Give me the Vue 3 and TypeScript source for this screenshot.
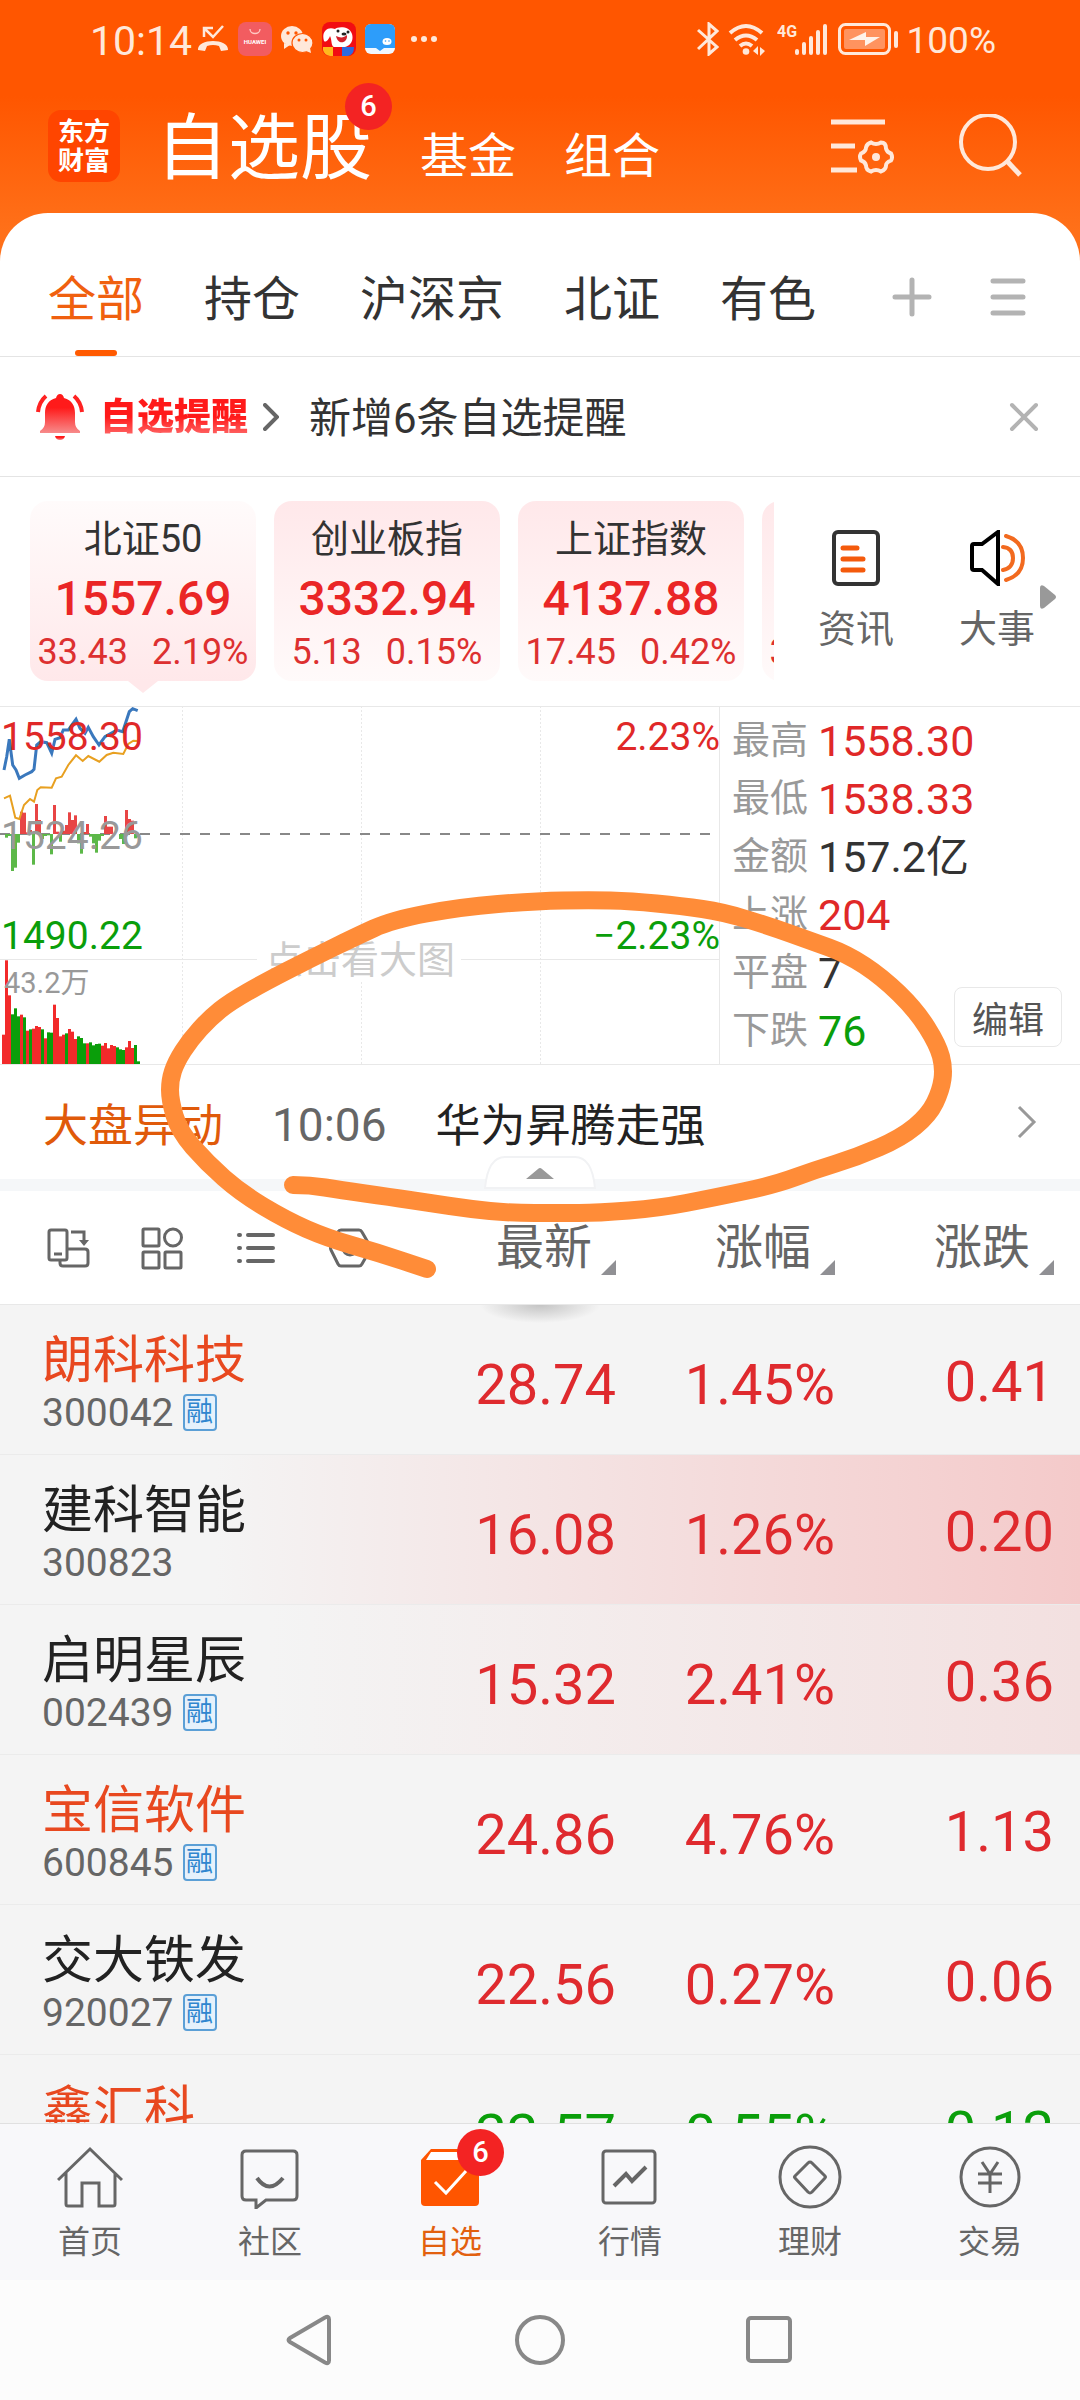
<script setup lang="ts">
interface IndexCard {
  name: string
  value: string
  diff: string
  pct: string
}
interface Stock {
  name: string
  code: string
  margin: boolean
  owned: boolean
  price: string
  pct: string
  diff: string
  down?: boolean
  glow?: string
}

const groups: string[] = ['全部', '持仓', '沪深京', '北证', '有色']

const cards: IndexCard[] = [
  { name: '北证50', value: '1557.69', diff: '33.43', pct: '2.19%' },
  { name: '创业板指', value: '3332.94', diff: '5.13', pct: '0.15%' },
  { name: '上证指数', value: '4137.88', diff: '17.45', pct: '0.42%' },
  { name: '', value: '', diff: '33.43', pct: '0.15%' },
]

const stats = [
  { label: '最高', value: '1558.30', tone: 'up' },
  { label: '最低', value: '1538.33', tone: 'up' },
  { label: '金额', value: '157.2亿', tone: 'flat' },
  { label: '上涨', value: '204', tone: 'up' },
  { label: '平盘', value: '7', tone: 'flat' },
  { label: '下跌', value: '76', tone: 'down' },
]

const stocks: Stock[] = [
  { name: '朗科科技', code: '300042', margin: true, owned: true, price: '28.74', pct: '1.45%', diff: '0.41' },
  { name: '建科智能', code: '300823', margin: false, owned: false, price: '16.08', pct: '1.26%', diff: '0.20', glow: 'strong' },
  { name: '启明星辰', code: '002439', margin: true, owned: false, price: '15.32', pct: '2.41%', diff: '0.36', glow: 'soft' },
  { name: '宝信软件', code: '600845', margin: true, owned: true, price: '24.86', pct: '4.76%', diff: '1.13' },
  { name: '交大铁发', code: '920027', margin: true, owned: false, price: '22.56', pct: '0.27%', diff: '0.06' },
  { name: '鑫汇科', code: '831167', margin: false, owned: true, price: '22.57', pct: '0.55%', diff: '0.12', down: true },
]

// Volume per minute: colour and height in thirds of a pixel
const volume: [string, number][] = [
  ['r', 88], ['r', 311], ['r', 206], ['g', 149], ['g', 167], ['g', 143], ['r', 148], ['g', 140], ['r', 100], ['g', 104],
  ['r', 106], ['r', 114], ['r', 111], ['g', 104], ['r', 77], ['g', 95], ['g', 94], ['r', 178], ['r', 138], ['r', 83],
  ['r', 88], ['g', 92], ['r', 105], ['r', 97], ['r', 75], ['g', 83], ['g', 78], ['g', 62], ['r', 62], ['g', 65],
  ['g', 56], ['g', 60], ['g', 61], ['r', 55], ['r', 63], ['r', 47], ['r', 57], ['r', 54], ['g', 50], ['g', 44],
  ['g', 42], ['r', 50], ['r', 69], ['r', 48], ['g', 57], ['g', 8],
]
// Net momentum around the previous close: minute, signed height in thirds
const momentum: [number, number][] = [
  [1, -11], [2, -6], [3, -111], [4, -101], [5, -26], [6, 67], [7, 64], [8, 5], [9, 12], [10, -92], [11, 90], [12, 42],
  [13, -15], [14, -6], [15, -4], [16, -61], [17, 87], [18, 7], [19, -23], [20, 10], [21, 27], [22, 65], [23, 42], [24, 56],
  [25, -28], [26, -59], [27, 6], [28, 30], [29, -8], [30, -28], [31, -56], [32, -20], [33, -6], [34, 54], [35, 22],
  [36, 22], [37, 2], [39, -15], [40, -30], [41, 72], [42, 45], [43, 40], [44, -13], [45, -10],
]

const priceLine = [
  12, 240, 20, 200, 28, 148, 38, 225, 48, 240, 58, 265, 75, 255, 95, 245, 102, 238, 110, 165, 122, 155, 140, 158, 155, 190,
  165, 148, 180, 143, 190, 120, 205, 120, 215, 105, 228, 88, 240, 115, 255, 130, 265, 112, 280, 140, 297, 165, 315, 140,
  340, 126, 350, 120, 368, 125, 378, 95, 388, 65, 398, 56, 413, 62,
]
const averageLine = [
  12, 325, 30, 317, 38, 350, 46, 383, 58, 387, 72, 345, 90, 327, 102, 335, 112, 300, 122, 292, 155, 293, 168, 265, 185, 260,
  205, 225, 228, 196, 248, 213, 265, 198, 298, 215, 320, 195, 340, 188, 370, 192, 385, 162, 400, 152, 413, 153,
]
function toPoints(values: number[]): string {
  const out: string[] = []
  for (let i = 0; i < values.length; i += 2) {
    out.push(`${(values[i] / 3).toFixed(1)},${(values[i + 1] / 3 - 16).toFixed(1)}`)
  }
  return out.join(' ')
}

// Hand-drawn circle, from its lower left start round to the tail
const stroke: [number, number][] = [
  [293, 1185], [310, 1185], [340, 1190], [390, 1197], [430, 1203], [470, 1209], [510, 1213], [560, 1213], [598, 1213],
  [660, 1208], [712, 1198], [774, 1185], [815, 1170], [857, 1157], [901, 1138], [929, 1115], [941, 1090], [944, 1068],
  [938, 1045], [916, 1010], [882, 977], [847, 954], [811, 941], [769, 926], [723, 912], [682, 906], [631, 901],
  [590, 900], [535, 901], [461, 907], [392, 920], [355, 937], [310, 959], [265, 982], [230, 1002], [210, 1018],
  [190, 1040], [176, 1062], [170, 1080], [170, 1100], [179, 1131], [207, 1163], [241, 1193], [286, 1220], [327, 1238],
  [379, 1253], [427, 1269],
]
function smooth(points: [number, number][]): string {
  let d = `M${points[0].join(' ')}`
  for (let i = 1; i < points.length - 1; i++) {
    const [x, y] = points[i]
    const [nx, ny] = points[i + 1]
    d += `Q${x} ${y} ${(x + nx) / 2} ${(y + ny) / 2}`
  }
  return d + `L${points[points.length - 1].join(' ')}`
}
const doodle = smooth(stroke)
</script>

<template>
  <div class="page">
    <header class="top">
      <div class="status">
        <span class="clock">10:14</span>
        <div class="notices">
          <svg width="32" height="30" viewBox="0 0 32 30" fill="none">
            <path d="M7 13V4h9M7 4l9 9L26 2" stroke="#ffe8da" stroke-width="2.500" />
            <path d="M1 26c-1-12 31-12 30 0l-7 1-2-5q-6-2-12 0l-2 5z" fill="#ffe8da" />
          </svg>
          <svg width="34" height="34" viewBox="0 0 34 34">
            <rect width="34" height="34" rx="8" fill="#f25c60" />
            <path d="M12 7c0 6 10 6 10 0" fill="none" stroke="#ffc9c4" stroke-width="1.3" />
            <text x="17" y="22" font-size="6" font-weight="700" fill="#fff" text-anchor="middle">HUAWEI</text>
          </svg>
          <svg width="32" height="30" viewBox="0 0 32 30">
            <ellipse cx="11" cy="12" rx="11" ry="10" fill="#ffe8da" />
            <path d="M3 19l0 6 6-4z" fill="#ffe8da" />
            <ellipse cx="21.500" cy="19" rx="10.500" ry="9.500" fill="#ffe8da" stroke="#ff5600" stroke-width="1.200" />
            <path d="M25 27l5 2-1-5z" fill="#ffe8da" />
            <g fill="#ff5600"><circle cx="7" cy="9" r="1.700" /><circle cx="15" cy="9" r="1.700" /><circle cx="18" cy="16" r="1.500" /><circle cx="25" cy="16" r="1.500" /></g>
          </svg>
          <svg width="34" height="34" viewBox="0 0 34 34">
            <rect width="34" height="34" rx="8" fill="#f20d12" />
            <path d="M2 19C-1 9 6 4 13 7c3-3 15-3 17 5 2 7-2 12-7 13H12C9 24 10 18 8 14c-1 3-4 7-6 5z" fill="#fff" />
            <path d="M14 14c4 2 8 2 11-1 1 8-9 11-11 1z" fill="#d3202a" />
            <circle cx="16" cy="9" r="1.500" fill="#222" /><circle cx="26" cy="10" r="1.500" fill="#222" /><ellipse cx="22" cy="12" rx="2.500" ry="1.500" fill="#222" />
            <path d="M1 25h10v9H8q-6-1-7-6z" fill="#ffb91c" /><path d="M20 25h12q0 8-6 9h-6z" fill="#2c6be0" />
          </svg>
          <svg width="30" height="30" viewBox="0 0 30 30">
            <rect width="30" height="30" rx="6" fill="#f2f8ff" />
            <path d="M0 24V6q0-6 6-6h18q6 0 6 6v18H19l-4 3-4-3z" fill="#2d9dfa" />
            <ellipse cx="22" cy="17.500" rx="4.500" ry="3.600" fill="#fff" /><circle cx="20.500" cy="17" r=".8" fill="#2d9dfa" /><circle cx="24" cy="17" r=".8" fill="#2d9dfa" />
          </svg>
          <svg width="26" height="8" viewBox="0 0 26 8" fill="#ffe8da"><circle cx="3" cy="4" r="3" /><circle cx="13" cy="4" r="3" /><circle cx="23" cy="4" r="3" /></svg>
        </div>
        <div class="signals">
          <svg width="22" height="34" viewBox="0 0 22 34" fill="none" stroke="#ffe8da" stroke-width="3"><path d="M1 8l19 17-8 7V2l8 7L1 27" /></svg>
          <svg width="40" height="34" viewBox="0 0 40 34" fill="none" stroke="#ffe8da" stroke-width="4">
            <path d="M2 11q16-14 32 0M7 18q11-9 22 0M12 24q6-5 12 0" />
            <circle cx="18" cy="29.500" r="3.300" fill="#ffe8da" stroke="none" />
            <path d="M25 29l5-5v9M37 29l-5-4v9" fill="#ffe8da" stroke="none" />
          </svg>
          <svg width="52" height="34" viewBox="0 0 52 34">
            <text x="0" y="15" class="net">4G</text>
            <g fill="#ffe8da"><rect x="18" y="27" width="4" height="6" rx="2" /><rect x="25" y="20" width="4" height="13" rx="2" /><rect x="32" y="14" width="4" height="19" rx="2" /><rect x="39" y="8" width="4" height="25" rx="2" /><rect x="46" y="2" width="4" height="31" rx="2" /></g>
          </svg>
          <svg width="60" height="34" viewBox="0 0 60 34">
            <rect x="1.500" y="2.500" width="50" height="29" rx="6" fill="none" stroke="#ffe8da" stroke-width="3" />
            <rect x="6" y="7" width="41" height="20" rx="2" fill="#ff935f" />
            <path d="M11 18l17-8v5h14L27 24v-6z" fill="#fff3ea" /><rect x="56" y="9" width="4" height="17" rx="2" fill="#ffe8da" />
          </svg>
          <span class="battery">100%</span>
        </div>
      </div>
      <div class="title">
        <div class="logo"><span>东方</span><span>财富</span></div>
        <nav class="mains">
          <a href="#watch" class="big">自选股<b class="badge">6</b></a>
          <a href="#fund">基金</a>
          <a href="#combo">组合</a>
        </nav>
        <div class="actions">
          <button aria-label="设置">
            <svg width="64" height="64" viewBox="0 0 64 64" fill="none" stroke="#ffe8da" stroke-width="5">
              <path d="M1 8h54M1 32h24M1 56h26" />
              <path d="M41 28.500q5 3 10 0c3 0 5 2 5 6q1 4 5 5 2 4 0 7-5 2-5 5 0 4-5 6-5-3-10 0c-4-1-5-3-5-6q-1-4-5-5-2-4 0-7 5-2 5-6 1-4 5-5z" stroke-width="4" />
              <circle cx="46" cy="43" r="4" fill="#ffe8da" stroke="none" />
            </svg>
          </button>
          <button aria-label="搜索">
            <svg width="64" height="64" viewBox="0 0 64 64" fill="none" stroke="#ffe8da" stroke-width="4"><circle cx="30" cy="28" r="27" /><path d="M49 47l13 14" stroke-width="5" /></svg>
          </button>
        </div>
      </div>
    </header>

    <main class="sheet">
      <div class="groups">
        <button v-for="(g, i) in groups" :key="g" :class="{ on: i === 0 }">{{ g }}</button>
        <div class="tools">
          <button aria-label="添加"><svg width="40" height="40" viewBox="0 0 40 40" stroke="#b3b3b3" stroke-width="5" stroke-linecap="round"><path d="M20 3v34M3 20h34" /></svg></button>
          <button aria-label="菜单"><svg width="36" height="40" viewBox="0 0 36 40" stroke="#b3b3b3" stroke-width="5" stroke-linecap="round"><path d="M3 4h30M3 20h30M3 36h30" /></svg></button>
        </div>
      </div>

      <div class="notice">
        <svg width="48" height="48" viewBox="0 0 48 48">
          <defs><linearGradient id="bell" x1="0" y1="0" x2="0" y2="1"><stop offset=".35" stop-color="#ff1a1a" /><stop offset="1" stop-color="#f78b8b" /></linearGradient></defs>
          <g fill="url(#bell)">
            <path d="M24 1q3 0 4 4c8 2 11 8 11 15v9q0 6 5 9v2H4v-2q5-3 5-9v-9C9 13 12 7 20 5q1-4 4-4z" />
            <path d="M19 43h10q-1 4-5 4t-5-4z" />
          </g>
          <path d="M10 3Q3 9 2 19M38 3q7 6 8 16" fill="none" stroke="#ff2222" stroke-width="4" />
        </svg>
        <strong>自选提醒</strong>
        <svg width="16" height="28" viewBox="0 0 16 28" fill="none" stroke="#666" stroke-width="4" stroke-linecap="round"><path d="M2 2l12 12L2 26" /></svg>
        <span>新增6条自选提醒</span>
        <button aria-label="关闭"><svg width="30" height="30" viewBox="0 0 30 30" stroke="#b3b3b3" stroke-width="4" stroke-linecap="round"><path d="M3 3l24 24M27 3L3 27" /></svg></button>
      </div>

      <section class="market">
        <div class="cards">
          <article v-for="(c, i) in cards" :key="i" class="card" :class="{ active: i === 0 }">
            <h3>{{ c.name }}</h3>
            <p class="value">{{ c.value }}</p>
            <p class="delta"><span>{{ c.diff }}</span><span>{{ c.pct }}</span></p>
          </article>
        </div>
        <div class="links">
          <a href="#news">
            <svg width="56" height="56" viewBox="0 0 56 56" fill="none" stroke-width="4">
              <rect x="6" y="2" width="44" height="52" rx="4" stroke="#333" />
              <path d="M15 18h14M15 29h20M15 40h20" stroke="#f45a0c" stroke-width="5" stroke-linecap="round" />
            </svg>
            资讯
          </a>
          <a href="#events">
            <svg width="56" height="56" viewBox="0 0 56 56" fill="none" stroke-width="4">
              <path d="M3 16q0-2 2-2h8L29 2v52L13 40H5q-2 0-2-2z" stroke="#000" />
              <path d="M34 17q10 1 10 11t-10 12M37 6q17 5 17 22T37 50" stroke="#f26a1f" stroke-linecap="round" />
            </svg>
            大事
          </a>
          <svg class="next" width="16" height="24" viewBox="0 0 16 24"><path d="M0 3q0-4 4-2l11 9q2 2 0 4L4 23q-4 2-4-2z" fill="#999" /></svg>
        </div>
      </section>

      <section class="overview">
        <svg class="chart" viewBox="0 0 720 359" role="img" aria-label="点击看大图">
          <g stroke="#e8e8e8" fill="none">
            <path d="M0 .5H720M0 253.500H720M0 358.500H720M719.500 0V358" />
            <path d="M182.500 0V358M361.500 0V358M540.500 0V358" stroke-dasharray="2 2" />
          </g>
          <rect x="257" y="232" width="204" height="44" fill="#fff" />
          <text x="265" y="267" class="mark">点击看大图</text>
          <path d="M0 128H714" stroke="#888" stroke-width="2" stroke-dasharray="10 10" />
          <rect v-for="[i, h] in momentum" :key="'m' + i" :x="2 + i * 3" width="3" :y="h > 0 ? 128 - h / 3 : 128" :height="Math.abs(h) / 3" :fill="h > 0 ? '#e84545' : '#5cb848'" />
          <rect v-for="([c, h], i) in volume" :key="'v' + i" :x="2 + i * 3" width="3" :y="358 - h / 3" :height="h / 3" :fill="c === 'r' ? '#f22a2a' : '#0a9e0a'" />
          <polyline :points="toPoints(averageLine)" fill="none" stroke="#e8a020" stroke-width="2" />
          <polyline :points="toPoints(priceLine)" fill="none" stroke="#3a78bd" stroke-width="3" />
          <text x="1" y="44" class="up">1558.30</text>
          <text x="1" y="143" class="prev">1524.26</text>
          <text x="1" y="243" class="down">1490.22</text>
          <text x="4" y="287" class="vol">43.2万</text>
          <text x="720" y="44" class="up end">2.23%</text>
          <text x="720" y="243" class="down end">−2.23%</text>
        </svg>
        <div class="side">
          <dl>
            <div v-for="s in stats" :key="s.label"><dt>{{ s.label }}</dt><dd :class="s.tone">{{ s.value }}</dd></div>
          </dl>
          <button class="edit">编辑</button>
        </div>
      </section>

      <section class="flash">
        <b>大盘异动</b><time>10:06</time><a href="#flash">华为昇腾走强</a>
        <svg class="go" width="20" height="34" viewBox="0 0 20 34" fill="none" stroke="#999" stroke-width="3"><path d="M2 2l15 15L2 32" /></svg>
        <svg class="handle" width="112" height="33" viewBox="0 0 112 33">
          <path d="M1 32Q4 1 21 1h70q17 0 20 31z" fill="#fff" stroke="#f1f2f4" stroke-width="2" />
          <path d="M42 23l12-10q2-2 4 0l12 10z" fill="#999" />
        </svg>
      </section>

      <div class="list">
        <table>
          <colgroup><col /><col class="num" /><col class="num" /><col class="last" /></colgroup>
          <thead>
            <tr>
              <th>
                <div class="views">
                  <button aria-label="横屏"><svg width="44" height="44" viewBox="0 0 44 44" fill="none" stroke="#666" stroke-width="3"><rect x="3" y="4" width="18" height="30" rx="2" /><path d="M8 28h8M25 6h13v11M21 23h18q3 0 3 3v11q0 3-3 3H17q-3 0-3-3v-3" /><path d="M33 14l5 6 5-6z" fill="#666" stroke="none" /></svg></button>
                  <button aria-label="宫格"><svg width="44" height="44" viewBox="0 0 44 44" fill="none" stroke="#666" stroke-width="3"><rect x="3" y="3" width="16" height="17" rx="1" /><circle cx="33" cy="11.500" r="8.500" /><rect x="3" y="26" width="16" height="16" rx="1" /><rect x="25" y="26" width="16" height="16" rx="1" /></svg></button>
                  <button aria-label="列表"><svg width="44" height="44" viewBox="0 0 44 44" fill="none" stroke="#666" stroke-width="4" stroke-linecap="round"><path d="M14 9h25M14 22h25M14 35h25M5 9h1M5 22h1M5 35h1" /></svg></button>
                  <button aria-label="筛选"><svg width="44" height="44" viewBox="0 0 44 44" fill="none" stroke="#666" stroke-width="3"><path d="M13 4h18q2 0 3 2l8 14q1 2 0 4l-8 14q-1 2-3 2H13q-2 0-3-2L3 24q-1-2 0-4l7-14q1-2 3-2z" /><circle cx="22" cy="22" r="7" /></svg></button>
                </div>
              </th>
              <th v-for="h in ['最新', '涨幅', '涨跌']" :key="h"><button class="sort">{{ h }}<i></i></button></th>
            </tr>
          </thead>
          <tbody>
            <tr v-for="s in stocks" :key="s.code" :class="[s.glow, { down: s.down }]">
              <td>
                <div class="name" :class="{ owned: s.owned }">{{ s.name }}</div>
                <div class="code">{{ s.code }}<em v-if="s.margin">融</em></div>
              </td>
              <td>{{ s.price }}</td>
              <td>{{ s.pct }}</td>
              <td class="diff">{{ s.diff }}</td>
            </tr>
          </tbody>
        </table>
      </div>
    </main>

    <nav class="tabbar">
      <a href="#home">
        <svg width="66" height="64" viewBox="0 0 66 64" fill="none" stroke="#666" stroke-width="3"><path d="M1 35L33 4l32 31M9 28v31q0 2 2 2h14V38h17v23h14q2 0 2-2V28" /></svg>
        首页
      </a>
      <a href="#community">
        <svg width="66" height="64" viewBox="0 0 66 64" fill="none" stroke="#666" stroke-width="3"><path d="M9 6h47q4 0 4 4v41q0 4-4 4H29l-10 8v-8H9q-4 0-4-4V10q0-4 4-4z" /><path d="M20 33q12 17 26 0" stroke-width="4" /></svg>
        社区
      </a>
      <a href="#watch" class="on">
        <svg width="66" height="64" viewBox="0 0 66 64" fill="none"><path d="M4 15L14 4h38l10 11v42q0 4-4 4H8q-4 0-4-4z" fill="#ff5500" /><path d="M14 7h38l5 8H9z" fill="#fff" /><path d="M18 37l11 11 20-22" stroke="#fff" stroke-width="3" /></svg>
        自选<b class="badge">6</b>
      </a>
      <a href="#quotes">
        <svg width="66" height="64" viewBox="0 0 66 64" fill="none" stroke="#666" stroke-width="3"><rect x="6" y="6" width="52" height="52" rx="3" /><path d="M17 41l12-12 6 7 14-14" stroke-width="4" /></svg>
        行情
      </a>
      <a href="#wealth">
        <svg width="66" height="64" viewBox="0 0 66 64" fill="none" stroke="#666" stroke-width="3"><circle cx="33" cy="32" r="30" /><path d="M31 18q2-2 4 0l13 13q1 1 0 2L35 47q-2 2-4 0L18 33q-1-1 0-2z" /></svg>
        理财
      </a>
      <a href="#trade">
        <svg width="66" height="64" viewBox="0 0 66 64" fill="none" stroke="#666" stroke-width="3"><circle cx="33" cy="32" r="29" /><path d="M25 17l8 12 8-12M21 29h24M21 38h24M33 29v19" /></svg>
        交易
      </a>
    </nav>

    <footer class="system">
      <button aria-label="返回"><svg width="50" height="52" viewBox="0 0 50 52" fill="none" stroke="#888" stroke-width="4"><path d="M40 3.500q4-2 4 2v41q0 4-4 2L5 28q-3-2 0-4z" /></svg></button>
      <button aria-label="主屏"><svg width="52" height="52" viewBox="0 0 52 52" fill="none" stroke="#888" stroke-width="4"><circle cx="26" cy="26" r="23" /></svg></button>
      <button aria-label="多任务"><svg width="50" height="52" viewBox="0 0 50 52" fill="none" stroke="#888" stroke-width="4"><rect x="3" y="4" width="42" height="43" rx="3" /></svg></button>
    </footer>

    <svg class="doodle" viewBox="0 0 1080 1300" aria-hidden="true"><path :d="doodle" /></svg>
  </div>
</template>

<style>
body {
  margin: 0;
  background: #fcfcfc;
}
</style>

<style scoped>
.page {
  position: relative;
  display: flex;
  flex-direction: column;
  height: 100vh;
  overflow: hidden;
  background: linear-gradient(#ff5600 96px, #ff7019 230px);
  color: #333;
  font-family: Roboto, "Noto Sans CJK SC", sans-serif;
}
button {
  display: flex;
  align-items: center;
  padding: 0;
  border: 0;
  background: none;
  color: inherit;
  font: inherit;
}
a {
  color: inherit;
  text-decoration: none;
}
svg {
  display: block;
  flex: none;
}
h3,
p,
dl,
dd {
  margin: 0;
  font-weight: 400;
}

.status {
  display: flex;
  align-items: center;
  height: 78px;
  padding: 0 84px 0 90px;
  color: #ffe8da;
}
.clock {
  padding-top: 3px;
  font-size: 41px;
}
.notices {
  display: flex;
  align-items: center;
  gap: 9px;
  margin-left: 5px;
}
.notices svg:last-child {
  margin-left: 7px;
}
.signals {
  display: flex;
  align-items: center;
  gap: 9px;
  margin-left: auto;
}
.net {
  fill: #ffe8da;
  font-size: 16px;
  font-weight: 700;
}
.battery {
  padding-top: 3px;
  font-size: 37px;
}
.title {
  display: flex;
  align-items: center;
  height: 135px;
  padding: 0 58px 0 48px;
  color: #fff;
}
.logo {
  display: flex;
  flex-direction: column;
  justify-content: center;
  align-items: center;
  width: 72px;
  height: 72px;
  padding-bottom: 4px;
  box-sizing: border-box;
  border-radius: 13px;
  background: #ff4500;
  font: 700 26px/29px "Noto Sans CJK SC", sans-serif;
}
.mains {
  display: flex;
  align-items: baseline;
  gap: 48px;
  margin-left: 36px;
  padding-top: 14px;
  font-size: 48px;
  line-height: 80px;
}
.big {
  position: relative;
  font-size: 72px;
}
.badge {
  position: absolute;
  display: flex;
  align-items: center;
  justify-content: center;
  width: 47px;
  height: 47px;
  border-radius: 50%;
  background: #f32323;
  color: #fff;
  font-size: 29px;
  font-weight: 500;
  line-height: 1;
}
.big .badge {
  top: -26px;
  right: -20px;
}
.actions {
  display: flex;
  gap: 64px;
  margin-left: auto;
}

.sheet {
  display: flex;
  flex: 1;
  flex-direction: column;
  min-height: 0;
  border-radius: 48px 48px 0 0;
  background: #fff;
  overflow: hidden;
}
.groups {
  display: flex;
  flex: none;
  gap: 60px;
  height: 143px;
  padding: 0 54px 0 48px;
  border-bottom: 1px solid #e4e4e4;
  font-size: 48px;
}
.groups > button {
  position: relative;
  padding-top: 20px;
}
.groups > .on {
  color: #f0600f;
}
.groups > .on::after {
  content: "";
  position: absolute;
  bottom: 0;
  left: 27px;
  width: 42px;
  height: 6px;
  border-radius: 3px;
  background: #ff5a00;
}
.tools {
  display: flex;
  gap: 58px;
  margin-left: auto;
  padding-top: 25px;
}
.notice {
  display: flex;
  flex: none;
  align-items: center;
  height: 119px;
  padding: 0 41px 0 36px;
  border-bottom: 1px solid #e4e4e4;
  font-size: 42px;
}
.notice strong {
  margin: 0 15px 0 16px;
  padding-bottom: 6px;
  background: linear-gradient(#ff1a1a 50%, #f66 80%);
  background-clip: text;
  color: transparent;
  font-size: 37px;
  font-weight: 900;
}
.notice span {
  margin-left: 30px;
  padding-bottom: 4px;
}
.notice button {
  margin-left: auto;
}

.market {
  display: flex;
  flex: none;
  height: 229px;
}
.cards {
  display: flex;
  flex: 1;
  gap: 18px;
  padding: 24px 0 0 30px;
  overflow: hidden;
}
.card {
  position: relative;
  flex: none;
  width: 226px;
  height: 180px;
  border-radius: 18px;
  background: linear-gradient(#ffe8ea, #fffafa);
  text-align: center;
}
.card.active {
  background: linear-gradient(#fffbfb, #ffe8ea);
}
.active::after {
  content: "";
  position: absolute;
  top: 180px;
  left: 98px;
  border: 15px solid transparent;
  border-top: 12px solid #ffe8ea;
  border-bottom: 0;
}
.card h3 {
  height: 64px;
  padding-top: 10px;
  box-sizing: border-box;
  font-size: 38px;
  line-height: 56px;
}
.value {
  height: 66px;
  color: #ea2626;
  font-size: 48px;
  font-weight: 500;
  line-height: 67px;
}
.delta {
  display: flex;
  justify-content: center;
  gap: 24px;
  color: #dd3030;
  font-size: 36px;
  line-height: 43px;
}
.links {
  position: relative;
  display: flex;
  flex: none;
  justify-content: center;
  gap: 65px;
  width: 282px;
  margin-right: 24px;
  padding: 53px 0 0 23px;
  box-sizing: border-box;
  color: #666;
  font-size: 38px;
  line-height: 56px;
}
.links a {
  display: flex;
  flex-direction: column;
  align-items: center;
  gap: 15px;
}
.next {
  position: absolute;
  top: 108px;
  right: 0;
}

.overview {
  display: flex;
  flex: none;
}
.chart {
  width: 66.667%;
  height: auto;
  font-size: 39px;
}
.chart .mark {
  fill: #ccc;
  font-size: 38px;
}
.chart .prev {
  fill: #999;
}
.chart .vol {
  fill: #999;
  font-size: 29px;
}
.chart .end {
  text-anchor: end;
}
.up {
  color: #e02828;
  fill: #e02828;
}
.down {
  color: #0a9e0a;
  fill: #0a9e0a;
}
.side {
  position: relative;
  flex: 1;
  padding: 5px 0 0 12px;
  border-top: 1px solid #e8e8e8;
  border-bottom: 1px solid #e8e8e8;
  box-sizing: border-box;
}
.side dl > div {
  display: flex;
  gap: 10px;
  height: 58px;
  font-size: 43px;
  line-height: 58px;
}
.side dt {
  color: #999;
  font-size: 38px;
  line-height: 56px;
}
.edit {
  position: absolute;
  right: 18px;
  bottom: 17px;
  justify-content: center;
  width: 108px;
  height: 60px;
  border: 1px solid #e8e8e8;
  border-radius: 8px;
  color: #555;
  font-size: 36px;
}

.flash {
  position: relative;
  display: flex;
  flex: none;
  align-items: center;
  height: 114px;
  padding: 0 43px;
  border-bottom: 12px solid #f5f7f9;
  color: #222;
  font-size: 45px;
}
.flash b {
  color: #e05a0a;
  font-weight: 400;
}
.flash time {
  margin: 0 49px 0 49px;
  padding-top: 5px;
  color: #666;
  font-size: 46px;
}
.go {
  margin-left: auto;
}
.handle {
  position: absolute;
  bottom: -10px;
  left: 50%;
  transform: translateX(-50%);
}

.list {
  flex: 1;
  min-height: 0;
  overflow: hidden;
}
table {
  width: 100%;
  border-spacing: 0;
  table-layout: fixed;
}
.num {
  width: 219px;
}
.last {
  width: 245px;
}
th {
  height: 114px;
  padding: 0;
  box-sizing: border-box;
  border-bottom: 1px solid #e8e8e8;
  color: #666;
  font-size: 48px;
  font-weight: 400;
}
th:last-child,
td:last-child {
  padding-right: 26px;
}
.views {
  display: flex;
  gap: 50px;
  padding-left: 46px;
}
.sort {
  margin-left: auto;
  line-height: 60px;
}
.sort i {
  align-self: flex-end;
  margin: 0 0 3px 9px;
  border-bottom: 15px solid #909094;
  border-left: 15px solid transparent;
}
tbody tr {
  background: #f4f4f4;
}
tbody tr:first-child {
  background: radial-gradient(ellipse 60px 18px at 540px 0, #c4c4c4, #f4f4f4);
}
tbody tr.strong {
  background: linear-gradient(90deg, #f4f4f4 20%, #f4caca);
}
tbody tr.soft {
  background: linear-gradient(90deg, #f4f4f4 25%, #f3e0e0);
}
td {
  height: 150px;
  padding: 10px 0 0;
  box-sizing: border-box;
  border-bottom: 1px solid #ebebeb;
  color: #df2a2e;
  font-size: 56px;
  text-align: right;
}
.down td {
  color: #0a9e0a;
}
td.diff {
  padding-top: 5px;
}
td:first-child {
  padding: 8px 0 0 42px;
  text-align: left;
}
.name {
  color: #222;
  font-size: 51px;
  line-height: 58px;
}
.name.owned {
  color: #e8481f;
}
.code {
  display: flex;
  align-items: center;
  gap: 9px;
  height: 46px;
  color: #666;
  font-size: 39px;
}
.code em {
  width: 30px;
  border: 2px solid #5b9fd6;
  border-radius: 4px;
  background: #e6f1fb;
  color: #2f86cf;
  font-size: 27px;
  font-style: normal;
  line-height: 33px;
  text-align: center;
}

.tabbar {
  display: flex;
  flex: none;
  height: 156px;
  border-top: 1px solid #e0e0e0;
  background: #f8f8fa;
  color: #666;
  font-size: 32px;
  line-height: 42px;
}
.tabbar a {
  position: relative;
  display: flex;
  flex: 1;
  flex-direction: column;
  align-items: center;
  gap: 12px;
  padding-top: 21px;
}
.tabbar .on {
  color: #e2600f;
}
.tabbar .badge {
  top: 5px;
  left: 97px;
}
.system {
  display: flex;
  flex: none;
  justify-content: center;
  gap: 179px;
  height: 120px;
  background: #fcfcfc;
}
.doodle {
  position: absolute;
  top: 0;
  left: 0;
  width: 100%;
  pointer-events: none;
}
.doodle path {
  fill: none;
  stroke: #ff8c38;
  stroke-width: 18px;
  stroke-linecap: round;
  stroke-linejoin: round;
}
</style>
